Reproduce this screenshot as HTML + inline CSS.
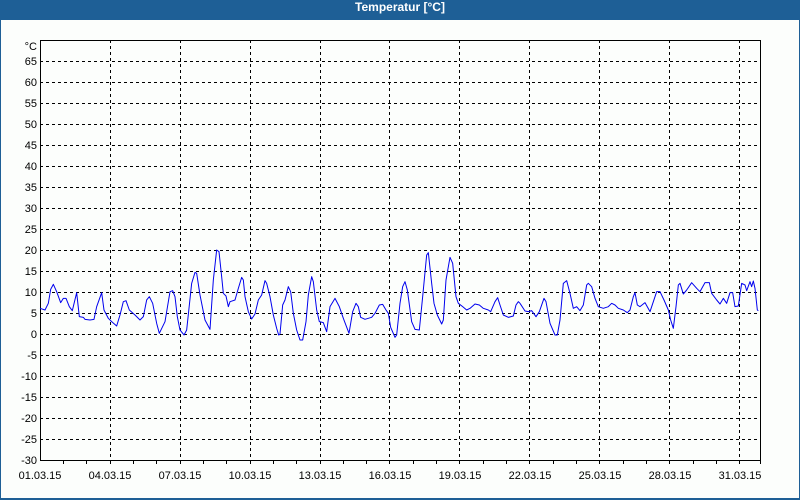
<!DOCTYPE html>
<html><head><meta charset="utf-8"><style>
html,body{margin:0;padding:0;width:800px;height:500px;overflow:hidden;background:#1e5f96}
#w{position:absolute;left:1px;top:20px;width:798px;height:478px;background:#fcfefc}
#t{position:absolute;left:0;top:0;width:800px;height:20px;line-height:20px;text-align:center;color:#fff;font:bold 12px "Liberation Sans",sans-serif}
svg{position:absolute;left:0;top:0}
text{font-family:"Liberation Sans",sans-serif;font-size:11px;fill:#000}
</style></head><body>
<div id="t">Temperatur [°C]</div>
<div id="w"></div>
<svg width="800" height="500" viewBox="0 0 800 500">
<g stroke="#000" stroke-width="1" stroke-dasharray="3,3" shape-rendering="crispEdges">
<line x1="40" y1="61.5" x2="760" y2="61.5"/><line x1="40" y1="82.5" x2="760" y2="82.5"/><line x1="40" y1="103.5" x2="760" y2="103.5"/><line x1="40" y1="124.5" x2="760" y2="124.5"/><line x1="40" y1="145.5" x2="760" y2="145.5"/><line x1="40" y1="166.5" x2="760" y2="166.5"/><line x1="40" y1="187.5" x2="760" y2="187.5"/><line x1="40" y1="208.5" x2="760" y2="208.5"/><line x1="40" y1="229.5" x2="760" y2="229.5"/><line x1="40" y1="250.5" x2="760" y2="250.5"/><line x1="40" y1="271.5" x2="760" y2="271.5"/><line x1="40" y1="292.5" x2="760" y2="292.5"/><line x1="40" y1="313.5" x2="760" y2="313.5"/><line x1="40" y1="334.5" x2="760" y2="334.5"/><line x1="40" y1="355.5" x2="760" y2="355.5"/><line x1="40" y1="376.5" x2="760" y2="376.5"/><line x1="40" y1="397.5" x2="760" y2="397.5"/><line x1="40" y1="418.5" x2="760" y2="418.5"/><line x1="40" y1="439.5" x2="760" y2="439.5"/>
<line x1="110.5" y1="40" x2="110.5" y2="460"/><line x1="180.5" y1="40" x2="180.5" y2="460"/><line x1="250.5" y1="40" x2="250.5" y2="460"/><line x1="320.5" y1="40" x2="320.5" y2="460"/><line x1="389.5" y1="40" x2="389.5" y2="460"/><line x1="459.5" y1="40" x2="459.5" y2="460"/><line x1="529.5" y1="40" x2="529.5" y2="460"/><line x1="599.5" y1="40" x2="599.5" y2="460"/><line x1="669.5" y1="40" x2="669.5" y2="460"/><line x1="739.5" y1="40" x2="739.5" y2="460"/>
</g>
<g stroke="#000" fill="none" shape-rendering="crispEdges">
<rect x="40.5" y="40.5" width="720" height="420"/>
<path d="M63.5 460v4M86.5 460v4M110.5 460v4M133.5 460v4M156.5 460v4M180.5 460v4M203.5 460v4M226.5 460v4M250.5 460v4M273.5 460v4M296.5 460v4M320.5 460v4M343.5 460v4M366.5 460v4M389.5 460v4M413.5 460v4M436.5 460v4M459.5 460v4M483.5 460v4M506.5 460v4M529.5 460v4M553.5 460v4M576.5 460v4M599.5 460v4M623.5 460v4M646.5 460v4M669.5 460v4M693.5 460v4M716.5 460v4M739.5 460v4M760.5 460v4"/>
</g>
<g text-anchor="end">
<text x="37" y="50">°C</text><text x="37" y="65">65</text><text x="37" y="86">60</text><text x="37" y="107">55</text><text x="37" y="128">50</text><text x="37" y="149">45</text><text x="37" y="170">40</text><text x="37" y="191">35</text><text x="37" y="212">30</text><text x="37" y="233">25</text><text x="37" y="254">20</text><text x="37" y="275">15</text><text x="37" y="296">10</text><text x="37" y="317">5</text><text x="37" y="338">0</text><text x="37" y="359">-5</text><text x="37" y="380">-10</text><text x="37" y="401">-15</text><text x="37" y="422">-20</text><text x="37" y="443">-25</text><text x="37" y="464">-30</text>
</g>
<g text-anchor="middle">
<text x="40" y="479">01.03.15</text><text x="110" y="479">04.03.15</text><text x="180" y="479">07.03.15</text><text x="250" y="479">10.03.15</text><text x="320" y="479">13.03.15</text><text x="390" y="479">16.03.15</text><text x="460" y="479">19.03.15</text><text x="530" y="479">22.03.15</text><text x="600" y="479">25.03.15</text><text x="670" y="479">28.03.15</text><text x="740" y="479">31.03.15</text>
</g>
<g fill="none" stroke="#0000ee" stroke-width="1" stroke-linejoin="round">
<polyline transform="translate(40,240) scale(0.33333)" vector-effect="non-scaling-stroke" points="0,205 15,210 25,190 32,148 40,133 50,155 62,188 70,175 78,175 88,200 97,212 110,158 118,230 130,232 135,238 150,240 162,238 170,200 185,158 192,210 205,235 215,245 230,258 240,225 250,185 258,182 268,210 285,225 300,240 310,230 320,180 328,170 338,190 350,250 358,280 375,245 390,155 398,152 405,170 412,230 420,270 432,285 440,270 455,130 465,97 470,100 480,165 495,240 510,268 520,120 530,30 537,35 545,110 550,160 558,168 565,200 570,185 585,180 595,145 605,112 610,120 615,170 625,215 635,237 645,222 655,180 665,165 675,122 680,130 690,170 700,225 710,265 716,285 720,283"/>
<polyline transform="translate(280,240) scale(0.33333)" vector-effect="non-scaling-stroke" points="0,282 8,195 15,180 25,140 32,155 40,220 50,270 60,300 68,300 78,245 85,165 95,110 100,125 110,210 118,245 130,248 140,275 150,200 165,175 178,200 190,235 207,280 218,215 228,190 235,200 242,232 255,238 275,232 285,220 298,195 308,193 318,210 325,220 332,262 345,292 350,285 360,190 368,140 375,125 382,150 395,245 405,268 418,270 428,170 440,45 445,38 455,130 462,190 472,225 485,252 490,240 498,120 510,52 518,70 528,170 535,190 548,200 560,210 570,205 585,192 598,195 610,205 625,210 632,215 645,185 653,173 660,195 670,225 685,232 700,228 708,195 715,185 720,190"/>
<polyline transform="translate(520,240) scale(0.33333)" vector-effect="non-scaling-stroke" points="0,190 15,213 25,215 35,212 48,230 58,215 72,175 78,185 90,250 105,285 112,285 120,240 130,130 140,122 150,160 160,205 170,200 180,212 190,195 200,135 205,130 215,140 225,175 235,200 250,205 265,200 275,190 285,195 295,205 310,210 322,218 330,210 340,170 345,158 352,195 360,200 375,188 390,215 400,185 410,155 420,155 432,180 445,210 452,240 460,265 468,200 475,135 480,130 490,162 500,150 515,128 530,145 540,155 555,128 568,128 575,160 590,180 600,192 610,175 620,190 630,158 638,158 645,200 655,198 665,130 675,135 680,152 690,125 695,140 700,123 705,145 712,210 715,212"/>
</g>
</svg>
</body></html>
